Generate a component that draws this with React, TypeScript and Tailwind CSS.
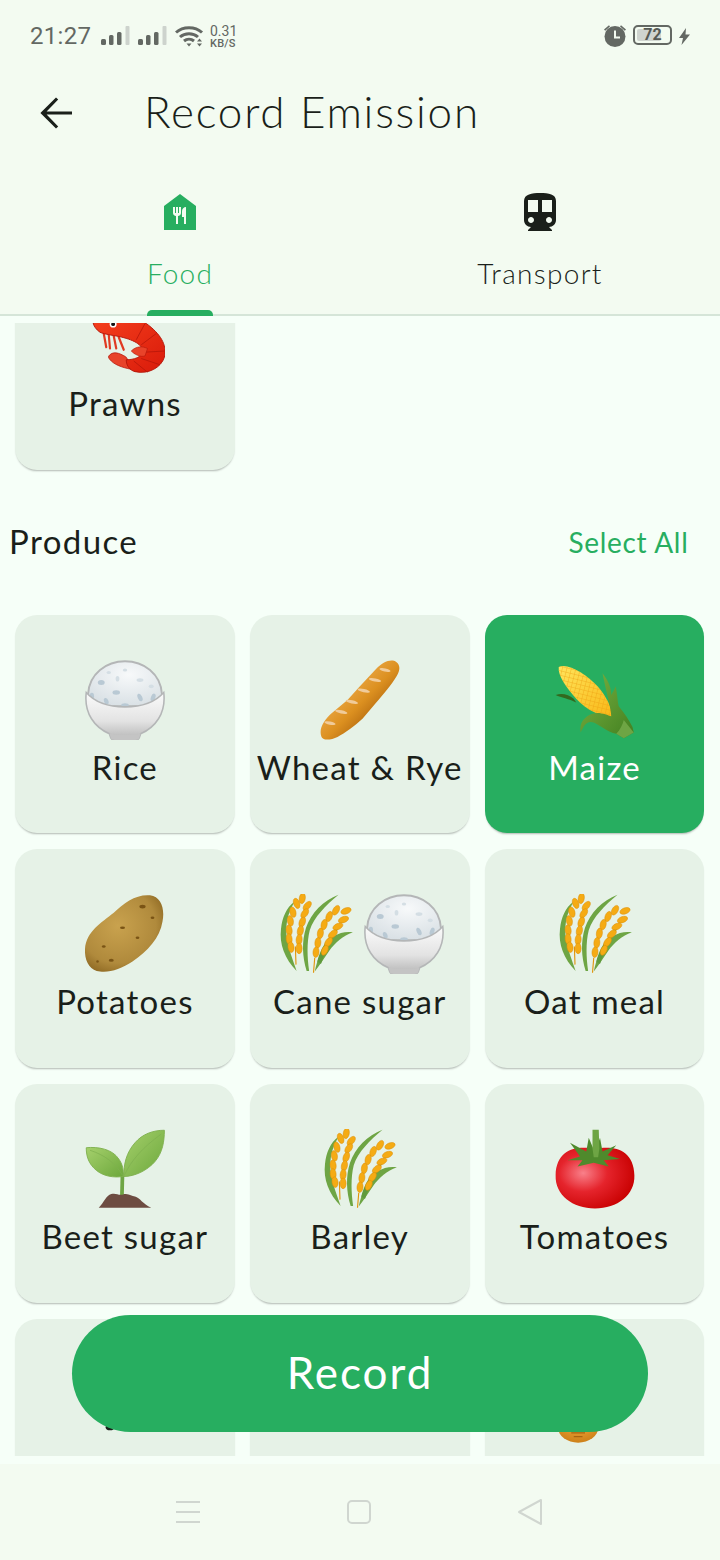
import type { ReactNode } from "react";

const font = { fontFamily: '"Lato", "Noto Sans", sans-serif' };

const Signal = () => (
  <svg width="29" height="20" viewBox="0 0 29 20">
    <rect x="0" y="13" width="5" height="6" rx="1.5" fill="#636863" />
    <rect x="8" y="9" width="4.5" height="10" rx="1.5" fill="#636863" />
    <rect x="16" y="6" width="4.5" height="13" rx="1.5" fill="#636863" />
    <rect x="24.5" y="0" width="4" height="19" rx="1" fill="#cdd3cd" />
  </svg>
);

const Wifi = () => (
  <svg width="29" height="22" viewBox="0 0 29 22" fill="none" stroke="#636863" strokeWidth="3">
    <path d="M1 7.5C8 1 20 1 27 7.5" />
    <path d="M5 12C10 7.5 18 7.5 23 12" />
    <path d="M9 16C12 13.5 16 13.5 19 16" />
    <path d="M11.5 18.5h5l-2.5 3z" fill="#636863" stroke="none" />
    <path d="M22 16.5h5l-2.5-3zM22 18.5h5l-2.5 3z" fill="#636863" stroke="none" />
  </svg>
);

const StatusBar = () => (
  <div className="h-[60px] flex items-start pt-[21px] pl-[30px] pr-[30px] text-[#636863]" style={{ fontFamily: "Roboto, sans-serif" }}>
    <span className="text-[24px] leading-[30px] w-[71px] tracking-[0.3px]">21:27</span>
    <div className="mt-[5px] flex gap-[8px]">
      <Signal />
      <Signal />
    </div>
    <div className="ml-[8px] mt-[4px]">
      <Wifi />
    </div>
    <div className="ml-[6px] mt-[4px] flex flex-col w-[30px]">
      <span className="text-[14px] leading-[13px]">0.31</span>
      <span className="text-[11px] leading-[11px] font-medium tracking-[0.2px]">KB/S</span>
    </div>
    <div className="ml-auto flex items-start">
      <svg className="mt-[2px]" width="24" height="24" viewBox="0 0 24 24" fill="#636863">
        <circle cx="12" cy="13.5" r="10.5" />
        <path d="M11 7.5h2v6h4v2h-6z" fill="#f3fbf1" />
        <path d="M1 6.5 6 2.2l1 1.2L2.2 7.7zM23 6.5 18 2.2l-1 1.2 4.8 4.3z" />
      </svg>
      <div className="ml-[6px] mt-[4px] w-[39px] h-[20px] border-2 border-[#636863] rounded-[5px] relative flex items-center p-[2px]">
        <div className="w-[24px] h-full bg-[#cfd4cf] rounded-[2px]" />
        <span className="absolute inset-0 text-center text-[16px] leading-[16px] font-bold text-[#555a55]">72</span>
      </div>
      <svg className="mt-[7px] ml-[7px]" width="11" height="17" viewBox="0 0 11 17" fill="#636863">
        <path d="M7 0 0 10h4l-1.5 7L11 6.500H6.500z" />
      </svg>
    </div>
  </div>
);

const Header = () => (
  <div className="h-[106px] flex items-center">
    <svg className="ml-[32px] -mt-[1px]" width="48" height="48" viewBox="0 0 24 24" fill="#1a1f1a">
      <path d="M20 11.2H7.3l5.8-5.9L12 4.2 4.200 12l7.800 7.800 1.100-1.100-5.800-5.900H20z" />
    </svg>
    <h1 className="ml-[64px] -mt-[4px] text-[44px] font-light text-[#1a1f1a] tracking-[1.750px]" style={font}>Record Emission</h1>
  </div>
);

const Tabs = () => (
  <div className="h-[150px] grid grid-cols-2 border-b-2 border-[#d5e5d8]" style={font}>
    <div className="relative flex flex-col items-center pt-[22px]">
      <svg width="48" height="48" viewBox="0 0 24 24" fill="#27ae60">
        <path d="M12,3L4,9v12h16V9L12,3z M12.5,12.5c0,0.83-0.67,1.5-1.5,1.5v4h-1v-4c-0.83,0-1.5-0.67-1.5-1.5v-3h1v3H10v-3h1v3h0.5v-3h1V12.5z M15,18h-1v-3.5h-1v-3c0-1.1,0.9-2,2-2V18z" />
      </svg>
      <span className="mt-[19px] text-[28px] leading-[36px] font-light text-[#27ae60] tracking-[1.200px]">Food</span>
      <div className="absolute bottom-[-2px] w-[66px] h-[6px] rounded-t-[5px] bg-[#27ae60]" />
    </div>
    <div className="flex flex-col items-center pt-[23px]">
      <svg width="48" height="48" viewBox="0 0 24 24" fill="#1a1f1a">
        <path d="M12 2C8 2 4 2.500 4 6v9.500C4 17.430 5.570 19 7.500 19L6 20.500v.5h12v-.5L16.500 19c1.930 0 3.500-1.570 3.500-3.500V6c0-3.500-3.580-4-8-4zM7.500 17c-.83 0-1.500-.67-1.500-1.500S6.670 14 7.500 14s1.500.67 1.500 1.500S8.330 17 7.500 17zm3.500-5.500H6V5.500h5zm2 0v-6h5v6zm3.500 5.500c-.83 0-1.500-.67-1.500-1.500s.67-1.500 1.500-1.500 1.500.67 1.500 1.500-.67 1.500-1.500 1.500z" />
      </svg>
      <span className="mt-[18px] text-[28px] leading-[36px] font-light text-[#1a1f1a] tracking-[1.300px]">Transport</span>
    </div>
  </div>
);

const Emoji = ({ children }: { children: ReactNode }) => (
  <svg width="80" height="80" viewBox="0 0 128 128">{children}</svg>
);

const Rice = () => (
  <Emoji>
    <defs>
      <radialGradient id="riceBall" cx="0.55" cy="0.3" r="0.8">
        <stop offset="0" stopColor="#f7f9fa" />
        <stop offset="1" stopColor="#d5dde2" />
      </radialGradient>
      <linearGradient id="riceBowl" x1="0" y1="0" x2="0" y2="1">
        <stop offset="0" stopColor="#fbfbfb" />
        <stop offset="0.6" stopColor="#e3e3e3" />
        <stop offset="1" stopColor="#b5b5b5" />
      </linearGradient>
    </defs>
    <path d="M5 54C7 22 34 2 64 2s57 20 59 52v20H5z" fill="url(#riceBall)" stroke="#b4b6b7" strokeWidth="3" />
    <g fill="#b9c9d4">
      <ellipse cx="26" cy="36" rx="5.500" ry="4" />
      <ellipse cx="50" cy="52" rx="6" ry="3.500" />
      <ellipse cx="52" cy="30" rx="3" ry="4.500" fill="#d4dee4" />
      <ellipse cx="38" cy="20" rx="3.500" ry="2.500" fill="#d4dee4" />
      <ellipse cx="64" cy="16" rx="3.500" ry="2.500" fill="#d4dee4" />
      <ellipse cx="88" cy="32" rx="5.500" ry="3" fill="#d4dee4" />
      <ellipse cx="88" cy="60" rx="3.500" ry="6.500" transform="rotate(-25 88 60)" />
      <ellipse cx="109" cy="60" rx="3.500" ry="6.500" transform="rotate(20 109 60)" />
      <ellipse cx="11" cy="58" rx="3.500" ry="5.500" />
      <ellipse cx="34" cy="66" rx="3.500" ry="5.500" transform="rotate(-20 34 66)" />
      <ellipse cx="64" cy="72" rx="6" ry="3" />
      <ellipse cx="106" cy="42" rx="4" ry="3" fill="#d4dee4" />
    </g>
    <path d="M2 52C16 68 40 75 64 75s48-7 62-23c4 34-14 56-37 66l-2 6c-1 3-3 4-7 4H48c-4 0-6-1-7-4l-2-6C16 108-2 86 2 52z" fill="url(#riceBowl)" stroke="#b4b6b7" strokeWidth="2.500" />
    <path d="M39 117c8 4 42 4 50 0l-2 7c-1 3-3 4-7 4H48c-4 0-6-1-7-4z" fill="#c4c4c4" />
  </Emoji>
);

const Baguette = () => (
  <Emoji>
    <defs>
      <linearGradient id="bread" x1="0.25" y1="0.25" x2="0.75" y2="0.75">
        <stop offset="0" stopColor="#efb054" />
        <stop offset="0.55" stopColor="#dc9020" />
        <stop offset="1" stopColor="#a9600c" />
      </linearGradient>
    </defs>
    <path d="M2 122C-2 110 6 96 20 84l24-20 18-20L90 14c10-11 24-17 32-11 7 5 6 14 1 22-8 14-22 30-34 44L68 94c-12 11-28 23-40 29-10 5-24 7-26-1z" fill="url(#bread)" />
    <g fill="#f0cb9a">
      <ellipse cx="104" cy="16" rx="9" ry="2.600" transform="rotate(12 104 16)" />
      <ellipse cx="88" cy="32" rx="10" ry="2.600" transform="rotate(12 88 32)" />
      <ellipse cx="70" cy="49" rx="10" ry="2.600" transform="rotate(12 70 49)" />
      <ellipse cx="51" cy="67" rx="10" ry="2.600" transform="rotate(12 51 67)" />
      <ellipse cx="34" cy="83" rx="10" ry="2.600" transform="rotate(12 34 83)" />
      <ellipse cx="16" cy="101" rx="9" ry="2.600" transform="rotate(12 16 101)" />
    </g>
  </Emoji>
);

const Corn = () => (
  <Emoji>
    <defs>
      <linearGradient id="cob" x1="0" y1="0" x2="1" y2="1">
        <stop offset="0" stopColor="#ffe55c" />
        <stop offset="1" stopColor="#f9b716" />
      </linearGradient>
      <pattern id="kernels" width="7" height="7" patternUnits="userSpaceOnUse" patternTransform="rotate(14)">
        <path d="M0 0H7M0 0V7" stroke="#eda012" strokeWidth="1.200" fill="none" />
      </pattern>
      <linearGradient id="husk" x1="0" y1="0" x2="1" y2="1">
        <stop offset="0" stopColor="#7cb342" />
        <stop offset="1" stopColor="#417f20" />
      </linearGradient>
    </defs>
    <path d="M1 56C12 52 22 56 30 62l4 6C22 62 10 60 1 56z" fill="#33691e" />
    <path d="M6 11C20 4 50 22 68 42c14 16 24 36 24 50C76 92 50 80 34 62 18 44 4 24 6 11z" fill="url(#cob)" />
    <path d="M6 11C20 4 50 22 68 42c14 16 24 36 24 50C76 92 50 80 34 62 18 44 4 24 6 11z" fill="url(#kernels)" />
    <path d="M41 116c-3-16 7-26 19-30 10-4 24 2 30 4 0-12-6-30-14-69 10 13 14 23 14 35 2-4 6-10 7-14 3 14 3 24 5 32 10 12 16 22 22 33l2 9-16 9-12-7c-14-2-26-14-36-18-12-4-16 6-21 16z" fill="url(#husk)" />
    <path d="M110 96l16 20-16 9-12-7c6-6 10-14 12-22z" fill="#6ea544" />
  </Emoji>
);

const Potato = () => (
  <Emoji>
    <defs>
      <radialGradient id="potato" cx="0.42" cy="0.4" r="0.75">
        <stop offset="0" stopColor="#c9a24e" />
        <stop offset="0.65" stopColor="#b08a3c" />
        <stop offset="1" stopColor="#7f5a18" />
      </radialGradient>
    </defs>
    <path d="M0 88C2 60 26 46 46 30 62 14 82 0 104 2c18 2 24 22 20 42-4 26-24 48-48 64-18 12-36 18-52 16C8 122-1 108 0 88z" fill="url(#potato)" />
    <g fill="#7a5415">
      <ellipse cx="92" cy="20" rx="5" ry="3" />
      <ellipse cx="108" cy="38" rx="3" ry="2" />
      <ellipse cx="60" cy="54" rx="4" ry="2" />
      <ellipse cx="30" cy="84" rx="3" ry="2" />
      <ellipse cx="84" cy="70" rx="3" ry="2" />
      <ellipse cx="42" cy="106" rx="4" ry="2.500" />
      <ellipse cx="20" cy="108" rx="2" ry="2" />
    </g>
  </Emoji>
);

const Grain = ({ x, y, r }: { x: number; y: number; r: number }) => (
  <ellipse cx={x} cy={y} rx="4.800" ry="8.500" transform={`rotate(${r} ${x} ${y})`} fill="#f5ab14" stroke="#dc8f08" strokeWidth="0.8" />
);

const Sheaf = () => (
  <Emoji>
    <path d="M33 123C14 104 5 80 8 56 10 38 16 22 30 12 19 30 15 48 17 68c3 20 10 38 16 55z" fill="#6ea544" />
    <path d="M49 123C42 100 41 76 48 54 56 30 76 10 100 1 80 18 61 36 54 58c-5 20-4 44-1 65z" fill="#6ea544" />
    <path d="M62 124C66 104 76 80 92 68c10-7 20-8 31-7-16 6-28 16-38 30-8 12-16 24-23 33z" fill="#6ea544" />
    <path d="M66 108C70 90 84 66 102 52 90 70 80 88 72 112z" fill="#5f9a3c" />
    <path d="M32 113 31 84M60 126l2-24" stroke="#e0940b" strokeWidth="1.800" fill="none" />
    {[
      [42, 7, 10],
      [33, 15, -20], [50, 19, 40],
      [27, 29, -15], [46, 31, 35],
      [23, 43, -10], [42, 45, 20],
      [21, 58, -8], [39, 59, 12],
      [21, 72, -5], [37, 73, 5],
      [24, 85, -8], [37, 87, 0],
      [112, 27, 70], [96, 26, 30],
      [108, 41, 70], [85, 36, 20],
      [99, 52, 65], [77, 49, 12],
      [91, 64, 50], [71, 63, 8],
      [84, 77, 35], [67, 78, 5],
      [78, 90, 25], [64, 93, 5],
    ].map(([x, y, r]) => (
      <Grain key={`${x}-${y}`} x={x} y={y} r={r} />
    ))}
  </Emoji>
);

const Seedling = () => (
  <Emoji>
    <defs>
      <linearGradient id="leaf" x1="0" y1="0" x2="1" y2="1">
        <stop offset="0" stopColor="#a5d06c" />
        <stop offset="1" stopColor="#6da83c" />
      </linearGradient>
    </defs>
    <path d="M57 70h6l-1 40h-6z" fill="#6ea544" />
    <path d="M22 126c8-8 12-20 20-22 8-2 10 2 18 1 10-3 14 3 20 3 8 2 12 12 26 18z" fill="#6d4c41" />
    <path d="M2 30c18-2 42 2 52 18 6 8 8 18 7 28-15 2-31 0-43-10C6 56 2 44 2 30z" fill="url(#leaf)" stroke="#7fb04f" strokeWidth="1.500" />
    <path d="M127 2c-18 0-35 6-47 20-14 16-18 34-18 54 18 0 38-10 50-24 12-14 15-32 15-50z" fill="url(#leaf)" stroke="#7fb04f" strokeWidth="1.500" />
    <path d="M63 74C74 50 92 30 122 8M60 74C48 54 32 42 8 34" stroke="#7fb04f" strokeWidth="1.200" fill="none" />
  </Emoji>
);

const Tomato = () => (
  <Emoji>
    <defs>
      <radialGradient id="tomato" cx="0.35" cy="0.42" r="0.68">
        <stop offset="0" stopColor="#f9808a" />
        <stop offset="0.45" stopColor="#e5242c" />
        <stop offset="1" stopColor="#c80000" />
      </radialGradient>
    </defs>
    <path d="M64 32c26-6 62-2 63 42 1 32-27 53-63 53S0 106 1 74C2 30 38 26 64 32z" fill="url(#tomato)" />
    <path d="M64 38 54 14l-4 22-26-14 16 22-20 6h24l-8 10 26-6 24 6-8-10 26-2-20-6 14-16-22 10-4-22z" fill="#4f8a2c" />
    <path d="M60 1h10l1 30-2 14h-7l-2-14z" fill="#6ea544" />
  </Emoji>
);

const Prawn = () => (
  <Emoji>
    <defs>
      <linearGradient id="prawn" x1="0" y1="0" x2="1" y2="1">
        <stop offset="0" stopColor="#f5411e" />
        <stop offset="1" stopColor="#d91a0a" />
      </linearGradient>
    </defs>
    <path d="M30 60 34 82M38 62l2 22M46 64l4 20M54 66l8 20" stroke="#e03a22" strokeWidth="3.500" strokeLinecap="round" fill="none" />
    <path d="M38 96c6-8 16-6 28 2l12 20c-12-2-28-6-36-14-4-4-5-6-4-8z" fill="#e8432a" stroke="#b3160a" strokeWidth="1.200" />
    <path d="M13 43C30 30 72 26 98 44c22 16 34 34 29 54-5 16-25 28-47 23-8-2-14-9-14-19 12 0 26-4 26-14 0-12-20-20-42-24-12-2-22-4-26-6-6-4-10-10-11-15z" fill="url(#prawn)" stroke="#b3160a" strokeWidth="1.500" />
    <path d="M96 44 82 70M114 60 90 78M127 88 94 90M120 110 90 100M100 122 78 104" stroke="#b3160a" strokeWidth="1.200" fill="none" />
    <path d="M74 88c8-8 18-8 26-4l-4 12c-8 2-16-2-22-8z" fill="#e8432a" stroke="#b3160a" strokeWidth="1" />
    <circle cx="45" cy="45" r="5.500" fill="#fff" />
    <circle cx="45" cy="45" r="3" fill="#111" />
  </Emoji>
);

const Dark = () => (
  <Emoji>
    <ellipse cx="40" cy="101" rx="7" ry="5" fill="#1a1f1a" />
  </Emoji>
);

const Coin = () => (
  <Emoji>
    <defs>
      <radialGradient id="coin" cx="0.5" cy="0.35" r="0.75">
        <stop offset="0" stopColor="#f2a93b" />
        <stop offset="1" stopColor="#c77a14" />
      </radialGradient>
    </defs>
    <ellipse cx="37" cy="102" rx="32" ry="24" fill="url(#coin)" />
    <path d="M26 110h22M30 116h14" stroke="#a86410" strokeWidth="2" fill="none" />
  </Emoji>
);

type Item = { label?: string; emoji: ReactNode; selected?: boolean };

const Card = ({ label, emoji, selected }: Item) => (
  <div className={`h-[218.670px] rounded-[22px] flex flex-col items-center pt-[45px] shadow-[0_2px_2px_-1px_rgba(0,0,0,0.28)] ${selected ? "bg-[#27ae60]" : "bg-[#e6f2e7]"}`}>
    {emoji}
    {label && (
      <span className={`mt-[5px] text-[33px] leading-[44px] whitespace-nowrap tracking-[1.250px] ${selected ? "text-white" : "text-[#1a1f1a]"}`} style={font}>
        {label}
      </span>
    )}
  </div>
);

const items: Item[] = [
  { label: "Rice", emoji: <Rice /> },
  { label: "Wheat & Rye", emoji: <Baguette /> },
  { label: "Maize", emoji: <Corn />, selected: true },
  { label: "Potatoes", emoji: <Potato /> },
  {
    label: "Cane sugar",
    emoji: (
      <div className="flex gap-[8px]">
        <Sheaf />
        <Rice />
      </div>
    ),
  },
  { label: "Oat meal", emoji: <Sheaf /> },
  { label: "Beet sugar", emoji: <Seedling /> },
  { label: "Barley", emoji: <Sheaf /> },
  { label: "Tomatoes", emoji: <Tomato /> },
  { emoji: <Dark /> },
  { emoji: <div className="w-[80px] h-[80px]" /> },
  { emoji: <Coin /> },
];

const FoodList = () => (
  <div className="relative h-[1148px] bg-[#f6fff8] py-[7px]">
    <div className="h-[1133px] overflow-hidden">
      <div className="-mt-[72px] pl-[15px] pr-[15.500px]">
        <div className="w-[220px]">
          <Card label="Prawns" emoji={<Prawn />} />
        </div>
        <div className="h-[145px] -ml-[6px] pr-[16px] flex items-center justify-between" style={font}>
          <span className="text-[33px] text-[#1a1f1a] tracking-[1.400px]">Produce</span>
          <span className="text-[28px] text-[#27ae60] tracking-[0.700px]">Select All</span>
        </div>
        <div className="grid grid-cols-3 gap-x-[15px] gap-y-[16px]">
          {items.map((item, i) => (
            <Card key={i} {...item} />
          ))}
        </div>
      </div>
    </div>
    <button className="absolute left-[72px] top-[999px] w-[576px] h-[117px] pb-[4px] rounded-full bg-[#27ae60] text-white text-[44px] tracking-[2px]" style={font}>
      Record
    </button>
  </div>
);

const NavBar = () => (
  <div className="flex-1 relative flex items-center justify-center gap-[145px] pb-[1px] pr-[3px]">
    <svg width="26" height="24" viewBox="0 0 26 24" fill="#d0d6d0">
      <rect x="1" y="1" width="24" height="2" />
      <rect x="1" y="11" width="24" height="2" />
      <rect x="1" y="21" width="24" height="2" />
    </svg>
    <svg width="26" height="26" viewBox="0 0 26 26" fill="none" stroke="#d0d6d0" strokeWidth="2">
      <rect x="2" y="2" width="22" height="22" rx="4" />
    </svg>
    <svg width="26" height="28" viewBox="0 0 26 28" fill="none" stroke="#d0d6d0" strokeWidth="2" strokeLinejoin="round">
      <path d="M24 2v24L2 14z" />
    </svg>
  </div>
);

export default function App() {
  return (
    <div className="w-[720px] h-[1560px] bg-[#f3fbf1] flex flex-col overflow-hidden">
      <StatusBar />
      <Header />
      <Tabs />
      <FoodList />
      <NavBar />
    </div>
  );
}
